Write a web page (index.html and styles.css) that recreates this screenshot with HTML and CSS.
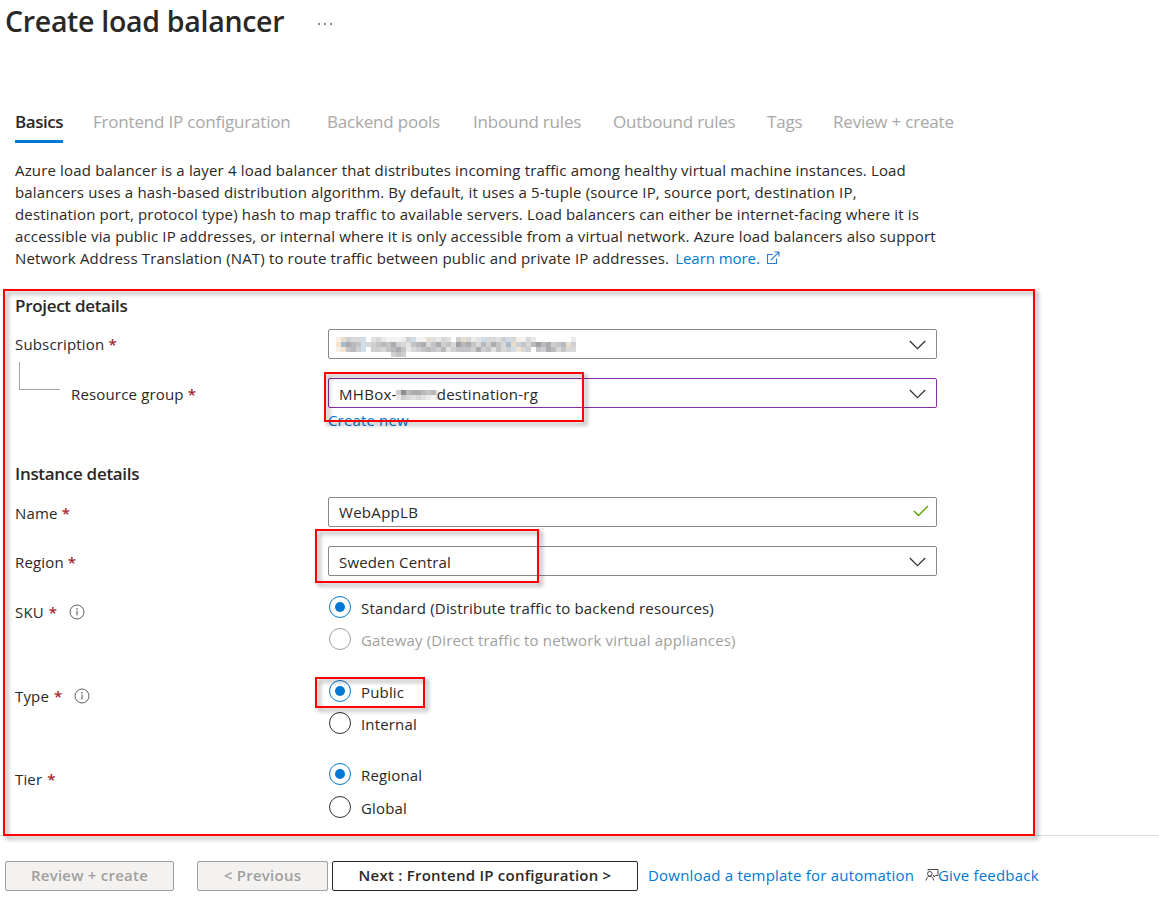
FILE: index.html
```html
<!DOCTYPE html>
<html lang="en">
<head>
<meta charset="utf-8">
<title>Create load balancer</title>
<link rel="stylesheet" href="styles.css">
</head>
<body>
<svg class="defs" width="0" height="0">
  <symbol id="chevron" viewBox="0 0 17 10"><path d="M.8 1l7.7 7.6L16.200 1" fill="none" stroke="#323130" stroke-width="1.3"/></symbol>
  <symbol id="info" viewBox="0 0 16 16"><circle cx="8" cy="8" r="7" fill="none" stroke="#605e5c"/><path d="M8 6.500v5" stroke="#605e5c" stroke-width="1.100"/><circle cx="8" cy="4.700" r=".8" fill="#605e5c"/></symbol>
</svg>

<header class="title-bar">
  <h1 class="title">Create load balancer</h1>
  <span class="more"><i></i><i></i><i></i></span>
</header>

<nav class="tabs">
  <span class="tab"><span class="tab-active">Basics</span></span>
  <span class="tab">Frontend IP configuration</span>
  <span class="tab">Backend pools</span>
  <span class="tab">Inbound rules</span>
  <span class="tab">Outbound rules</span>
  <span class="tab">Tags</span>
  <span class="tab">Review + create</span>
</nav>

<p class="intro">Azure load balancer is a layer 4 load balancer that distributes incoming traffic among healthy virtual machine instances. Load<br>balancers uses a hash-based distribution algorithm. By default, it uses a 5-tuple (source IP, source port, destination IP,<br>destination port, protocol type) hash to map traffic to available servers. Load balancers can either be internet-facing where it is<br><span class="tight">accessible via public IP addresses, or internal where it is only accessible from a virtual network. Azure load balancers also support</span><br>Network Address Translation (NAT) to route traffic between public and private IP addresses. <a class="link learn">Learn more.</a><svg class="external" width="14" height="14" viewBox="0 0 14 14"><path d="M7 3.500H1.500v9h9V7.500M5 9l7.700-7.700M8.500 1H13v4.500" fill="none" stroke="#2b7cd3" stroke-width="1.100"/></svg></p>

<main class="form">
  <h2 class="section">Project details</h2>
  <div class="row">
    <label class="label">Subscription <b class="req">*</b></label>
    <div class="field"><svg id="subscription-mask" class="mask" width="240" height="20"></svg><svg class="chevron"><use href="#chevron"/></svg></div>
  </div>
  <div class="row row-child">
    <span class="branch"></span>
    <label class="label label-child">Resource group <b class="req">*</b></label>
    <div class="field field-focus"><span class="value wide low">MHBox-</span><svg id="group-mask" class="mask-inline" width="43" height="10"></svg><span class="value dest low">destination-rg</span><svg class="chevron"><use href="#chevron"/></svg></div>
  </div>
  <a class="link create-new">Create new</a>

  <h2 class="section section-instance">Instance details</h2>
  <div class="row row-name">
    <label class="label">Name <b class="req">*</b></label>
    <div class="field"><span class="value wide">WebAppLB</span><svg class="check" viewBox="0 0 16 12"><path d="M1 6l4.500 4.500L15 1" fill="none" stroke="#57a300" stroke-width="1.400"/></svg></div>
  </div>
  <div class="row row-region">
    <label class="label">Region <b class="req">*</b></label>
    <div class="field"><span class="value low">Sweden Central</span><svg class="chevron"><use href="#chevron"/></svg></div>
  </div>
  <div class="row group">
    <label class="label">SKU <b class="req">*</b><svg class="info"><use href="#info"/></svg></label>
    <div class="radios">
      <div class="radio"><i class="dot on"></i><span>Standard (Distribute traffic to backend resources)</span></div>
      <div class="radio disabled"><i class="dot"></i><span>Gateway (Direct traffic to network virtual appliances)</span></div>
    </div>
  </div>
  <div class="row group group-type">
    <label class="label">Type <b class="req">*</b><svg class="info"><use href="#info"/></svg></label>
    <div class="radios">
      <div class="radio"><i class="dot on"></i><span>Public</span></div>
      <div class="radio"><i class="dot"></i><span>Internal</span></div>
    </div>
  </div>
  <div class="row group group-tier">
    <label class="label">Tier <b class="req">*</b></label>
    <div class="radios">
      <div class="radio"><i class="dot on"></i><span>Regional</span></div>
      <div class="radio"><i class="dot"></i><span>Global</span></div>
    </div>
  </div>
</main>

<footer class="footer">
  <button class="btn btn-review" disabled>Review + create</button>
  <button class="btn btn-prev" disabled>&lt; Previous</button>
  <button class="btn btn-next">Next : Frontend IP configuration &gt;</button>
  <a class="link download">Download a template for automation</a>
  <a class="link feedback"><svg width="14" height="12" viewBox="0 0 14 12"><g fill="none" stroke="#484644"><circle cx="4.800" cy="4.800" r="2.300"/><path d="M1 11.500c.3-2.700 1.700-4.200 3.800-4.200s3.500 1.500 3.900 4.200M3 1.500V.5h10v6h-2.500L9 8V6.500H8"/></g></svg>Give feedback</a>
</footer>

<div class="mark mark-form"></div>
<div class="mark mark-group"></div>
<div class="mark mark-region"></div>
<div class="mark mark-public"></div>
<script src="mask.js"></script>
</body>
</html>
```
FILE: styles.css
```css
* { box-sizing: border-box; }
body {
  margin: 0;
  height: 903px;
  position: relative;
  overflow: hidden;
  background: #fff;
  color: #292827;
  font: 15px/22px "Open Sans", sans-serif;
  letter-spacing: .16px;
  white-space: nowrap;
}
h1, h2, p { margin: 0; }
.defs { position: absolute; }
.title-bar { height: 100px; padding: 1px 0 0 5px; display: flex; align-items: flex-start; }
.title { width: 312px; font-size: 28.5px; line-height: 40px; font-weight: 600; letter-spacing: -.3px; }
.more { display: flex; gap: 4px; padding-top: 22px; margin-left: 1px; }
.more i { width: 2px; height: 2px; background: #605e5c; border-radius: 1px; }

.tabs {
  display: grid;
  grid-template-columns: 78px 234px 146px 140px 154px 66px auto;
  height: 43px;
  margin-left: 15px;
  font-size: 17px;
  line-height: 43px;
  letter-spacing: -.2px;
  color: #a9a8a7;
}
.tab-active { display: block; width: 48px; height: 43px; border-bottom: 3px solid #0078d4; color: #292827; font-weight: 600; letter-spacing: -.45px; }
.intro { margin: 16px 0 0 15px; }
.tight { letter-spacing: .142px; }
.link { color: #0078d4; }
.learn { margin-left: 2px; letter-spacing: -.05px; }
.external { margin-left: 6px; vertical-align: -1px; }

.form { margin: 22px 0 0 15px; height: 544px; }
.section { font-size: 17px; line-height: 30px; font-weight: 600; letter-spacing: -.3px; height: 38px; }
.row { display: flex; position: relative; }
.row-child, .row-region { margin-top: 19px; }
.label { width: 313px; line-height: 30px; }
.row-name .label, .row-region .label { height: 30px; padding-top: 1px; }
.label-child { padding: 1px 0 0 56px; }
.req { color: #a4262c; font-weight: 600; }
.branch { position: absolute; left: 4px; top: -16px; width: 41px; height: 28px; border: solid #a6a6a6; border-width: 0 0 1px 1px; }
.field {
  width: 609px;
  height: 30px;
  border: 1px solid #8a8886;
  border-radius: 2px;
  padding: 0 10px;
  display: flex;
  align-items: center;
  line-height: 28px;
}
.row-child { height: 30px; }
.field-focus { border-color: #8a2da5; }
.low { padding-top: 2px; }
.wide { letter-spacing: .3px; }
.dest { letter-spacing: .25px; margin-left: -2px; }
.mask { margin: 5px 0 0 -3px; }
.mask-inline { margin: 4px 0 0 -1px; }
.chevron { width: 17px; height: 10px; margin: 1px 0 0 auto; }
.check { width: 16px; height: 12px; margin: 0 -3px 2px auto; }
.create-new { display: block; margin: 2px 0 0 313px; line-height: 21px; height: 21px; }
.section-instance { margin-top: 28px; }
.group { margin-top: 20px; }
.group-type { margin-top: 30px; }
.group-tier { margin-top: 29px; }
.group .label { line-height: 32px; display: flex; }
.group .req { margin-left: 5px; }
.info { width: 16px; height: 16px; margin: 8px 0 0 12px; }
.radios { display: grid; gap: 10px; }
.group-tier .radios { gap: 11px; }
.radio { display: flex; height: 22px; line-height: 24px; padding-left: 1px; }
.dot { width: 22px; height: 22px; border: 1px solid #323130; border-radius: 50%; margin-right: 10px; display: grid; place-items: center; }
.on { border-color: #0078d4; }
.on::before { content: ""; width: 10px; height: 10px; border-radius: 50%; background: #0078d4; }
.disabled { color: #a19f9d; }
.disabled .dot { border-color: #a19f9d; }

.footer { border-top: 1px solid #dddcdb; height: 68px; padding: 25px 0 0 5px; display: flex; line-height: 28px; }
.btn { height: 30px; padding: 0 0 2px; border: 1px solid #292827; border-radius: 2px; background: #fff; color: #292827; font: 600 15px/26px "Open Sans", sans-serif; letter-spacing: .24px; }
.btn:disabled { border-color: #a19f9d; background: #f3f2f1; color: #a19f9d; }
.btn-review { width: 169px; margin-right: 23px; }
.btn-prev { width: 131px; margin-right: 4px; }
.btn-next { width: 306px; margin-right: 10px; }
.download { width: 277px; letter-spacing: .2px; }
.feedback { letter-spacing: .2px; display: flex; }
.feedback svg { margin: 8px -1px 0 0; }

.mark { position: absolute; border: 2px solid #f00; filter: drop-shadow(3px 3px 2px rgba(0, 0, 0, .42)); pointer-events: none; }
.mark-form { left: 3px; top: 289px; width: 1032px; height: 547px; }
.mark-group { left: 324px; top: 372px; width: 260px; height: 50px; }
.mark-region { left: 315px; top: 529px; width: 224px; height: 54px; }
.mark-public { left: 315px; top: 677px; width: 110px; height: 31px; }
```
FILE: mask.js
```js
// Draws redacted values as rows of 5px cells; each character is a tone.
const tones = {
  '0': '#8f8d90', '1': '#a09fa1', '2': '#adabad', '3': '#b9b8ba', '4': '#c4c4c6',
  '5': '#cfced0', '6': '#d8d8d9', '7': '#e1e1e2', '8': '#eaeaeb', '9': '#f3f3f3',
  a: '#f6e3d0', b: '#a9bccb', c: '#cfdde8', d: '#e8ddcf', e: '#f8efe6', '.': '#ffffff'
};
function drawMask(id, rows) {
  const svg = document.getElementById(id);
  rows.forEach((row, y) => [...row].forEach((tone, x) => {
    const cell = document.createElementNS('http://www.w3.org/2000/svg', 'rect');
    cell.setAttribute('x', x * 5);
    cell.setAttribute('y', y * 5);
    cell.setAttribute('width', 5);
    cell.setAttribute('height', 5);
    cell.setAttribute('fill', tones[tone]);
    svg.appendChild(cell);
  }));
}
drawMask('subscription-mask', [
  'ed566c.76899985c99d7867.5d687c6675c6e968.......8',
  'ab234c6543425674326425461324635246bd5463132543d5',
  'ea435c.5564324865434537544452547465ca65.45236466',
  '...........545..................................'
]);
drawMask('group-mask', [
  '503223438',
  '856767897'
]);
```
